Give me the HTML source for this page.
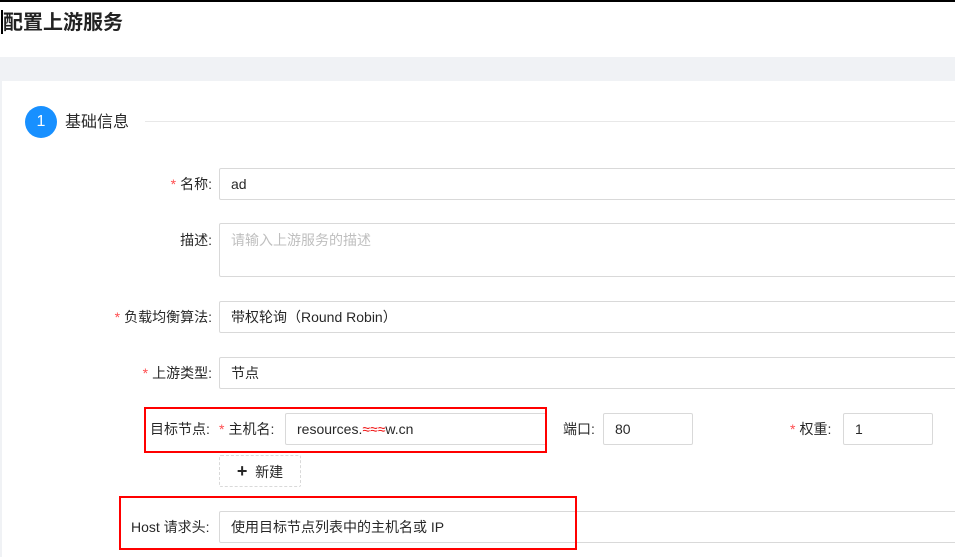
<!DOCTYPE html>
<html><head><meta charset="utf-8"><style>
body{margin:0;width:955px;height:557px;overflow:hidden;background:#fff;font-family:"Liberation Sans","Noto Sans CJK SC",sans-serif;font-size:14px;color:rgba(0,0,0,.85);position:relative}
.a{position:absolute}
.inp{position:absolute;border:1px solid #d9d9d9;border-radius:2px;box-sizing:border-box;background:#fff;padding-left:11px;line-height:31px;height:32px}
.lbl{position:absolute;text-align:right;line-height:33px;height:32px}
.req{color:#ff4d4f;margin-right:4px}
.box{position:absolute;border:2px solid #f00;box-sizing:border-box}
</style></head><body>
<div class="a" style="left:0;top:0;width:955px;height:2px;background:#000"></div>
<div class="a" style="left:1px;top:10px;width:2px;height:24px;background:#000"></div>
<div class="a" style="left:3px;top:11px;font-size:20px;font-weight:bold;line-height:24px;color:#222">配置上游服务</div>
<div class="a" style="left:0;top:57px;width:955px;height:500px;background:#f0f2f5"></div>
<div class="a" style="left:2px;top:81px;width:953px;height:476px;background:#fff"></div>
<div class="a" style="left:25px;top:106px;width:32px;height:32px;border-radius:50%;background:#1890ff;color:#fff;text-align:center;line-height:32px;font-size:16px">1</div>
<div class="a" style="left:65px;top:111px;font-size:16px;line-height:24px">基础信息</div>
<div class="a" style="left:145px;top:121px;width:810px;height:1px;background:#e8e8e8"></div>

<div class="lbl" style="right:743px;top:168px"><span class="req">*</span>名称:</div>
<div class="inp" style="left:219px;top:168px;width:740px">ad</div>
<div class="lbl" style="right:743px;top:224px">描述:</div>
<div class="inp" style="left:219px;top:223px;width:740px;height:54px;line-height:33px;color:#bfbfbf">请输入上游服务的描述</div>
<div class="lbl" style="right:743px;top:301px"><span class="req">*</span>负载均衡算法:</div>
<div class="inp" style="left:219px;top:301px;width:740px">带权轮询（Round Robin）</div>
<div class="lbl" style="right:743px;top:357px"><span class="req">*</span>上游类型:</div>
<div class="inp" style="left:219px;top:357px;width:740px">节点</div>

<div class="lbl" style="left:150px;top:413px">目标节点:</div>
<div class="lbl" style="left:219px;top:413px"><span class="req">*</span>主机名:</div>
<div class="inp" style="left:285px;top:413px;width:262px">resources.<span style="color:#e00">&#x2248;&#x2248;&#x2248;</span>w.cn</div>
<div class="lbl" style="left:563px;top:413px">端口:</div>
<div class="inp" style="left:603px;top:413px;width:90px">80</div>
<div class="lbl" style="left:790px;top:413px"><span class="req">*</span>权重:</div>
<div class="inp" style="left:843px;top:413px;width:90px">1</div>
<div class="a" style="left:219px;top:455px;width:82px;height:32px;border:1px dashed #d9d9d9;box-sizing:border-box;border-radius:2px;line-height:31px;text-align:center"><b style="font-size:18px">+</b>&nbsp; 新建</div>

<div class="lbl" style="left:131px;top:511px">Host 请求头:</div>
<div class="inp" style="left:219px;top:511px;width:740px">使用目标节点列表中的主机名或 IP</div>

<div class="box" style="left:144px;top:407px;width:403px;height:46px"></div>
<div class="box" style="left:119px;top:496px;width:458px;height:54px"></div>
</body></html>
